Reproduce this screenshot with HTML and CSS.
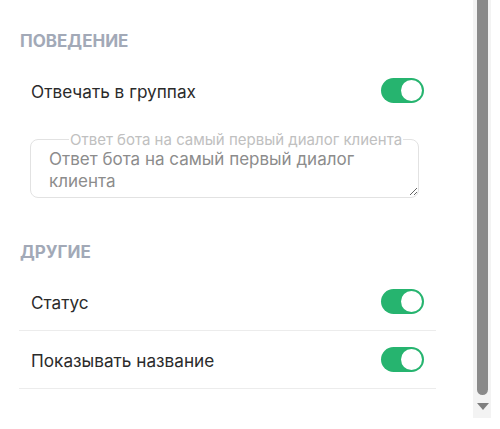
FILE: index.html
```html
<!DOCTYPE html>
<html lang="ru">
<head>
<meta charset="utf-8">
<link rel="stylesheet" href="styles.css">
</head>
<body>
<div class="shell">
  <div class="panel">
    <h3 class="section-title first">Поведение</h3>
    <div class="row plain">
      <span class="label">Отвечать в группах</span>
      <span class="toggle"><span class="knob"></span></span>
    </div>
    <fieldset class="field">
      <legend class="legend">Ответ бота на самый первый диалог клиента</legend>
      <textarea class="area" rows="2" placeholder="Ответ бота на самый первый диалог клиента"></textarea>
    </fieldset>
    <h3 class="section-title second">Другие</h3>
    <div class="list">
      <div class="row">
        <span class="label">Статус</span>
        <span class="toggle"><span class="knob"></span></span>
      </div>
      <div class="row">
        <span class="label">Показывать название</span>
        <span class="toggle"><span class="knob"></span></span>
      </div>
    </div>
  </div>
  <div class="scrollbar">
    <div class="thumb"></div>
    <div class="arrow"></div>
  </div>
</div>
</body>
</html>
```
FILE: styles.css
```css
html, body {
  margin: 0;
  padding: 0;
  background: #ffffff;
}
body {
  font-family: Inter, "Noto Sans", sans-serif;
  color: #2b2b2b;
}
.shell {
  display: flex;
  width: 491px;
  height: 418px;
}
.panel {
  width: 473px;
  padding: 0 37px 0 19px;
  box-sizing: border-box;
  overflow: hidden;
}
.section-title {
  margin: 0;
  padding: 0 0 0 1px;
  font-size: 17px;
  font-weight: 700;
  text-transform: uppercase;
  color: #a2a9b7;
  height: 20px;
  line-height: 20px;
}
.section-title.first {
  margin-top: 31px;
}
.section-title.second {
  margin-top: 44px;
}
.row {
  display: flex;
  align-items: center;
  justify-content: space-between;
  height: 57px;
  padding: 0 12px;
  border-bottom: 1px solid #ececec;
}
.row.plain {
  border-bottom: none;
  margin-top: 10px;
  height: 58px;
}
.label {
  font-size: 17.2px;
  padding-top: 2px;
}
.toggle {
  position: relative;
  width: 43px;
  height: 25px;
  border-radius: 13px;
  background: #26b46f;
  flex: none;
}
.knob {
  position: absolute;
  right: 2px;
  top: 2px;
  width: 21px;
  height: 21px;
  border-radius: 50%;
  background: #ffffff;
}
.field {
  margin: 13px 17px 0 11px;
  padding: 0 0 0 18px;
  border: 1px solid #e2e2e2;
  border-radius: 8px;
  height: 66px;
  box-sizing: border-box;
}
.legend {
  margin-left: 20px;
  padding: 0 1px;
  font-size: 15px;
  line-height: 15px;
  color: #c0c0c0;
}
.area {
  display: block;
  width: 100%;
  height: 48px;
  margin-top: 1px;
  border: none;
  outline: none;
  padding: 0;
  resize: both;
  font-family: Inter, "Noto Sans", sans-serif;
  font-size: 17px;
  line-height: 22px;
  background: transparent;
}
.area::placeholder {
  color: #8c8c8c;
}
.list {
  margin-top: 11px;
}
.scrollbar {
  width: 18px;
  height: 418px;
  background: #f3f3f3;
  display: flex;
  flex-direction: column;
  align-items: center;
  box-sizing: border-box;
  padding-left: 1px;
}
.thumb {
  width: 11px;
  height: 395px;
  background: #8a8a8a;
  border-radius: 0 0 6px 6px;
}
.arrow {
  margin-top: 8px;
  width: 0;
  height: 0;
  border-left: 6px solid transparent;
  border-right: 6px solid transparent;
  border-top: 7px solid #7f7f7f;
}
```
